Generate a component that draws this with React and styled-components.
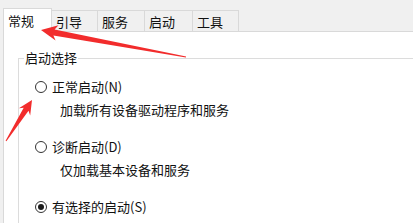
import React from 'react';
import styled, { createGlobalStyle } from 'styled-components';

const GlobalStyle = createGlobalStyle`
  html, body {
    margin: 0;
    padding: 0;
    background: #f0f0f0;
    overflow: hidden;
  }
  * {
    box-sizing: border-box;
  }
`;

const Window = styled.div`
  position: relative;
  width: 413px;
  height: 223px;
  overflow: hidden;
  background: #f0f0f0;
  font-family: "Noto Sans CJK SC", "Noto Sans", sans-serif;
  font-size: 13px;
  color: #111111;
`;

const TabBar = styled.div`
  display: flex;
  align-items: flex-end;
  height: 32px;
  margin-left: 3px;
  border-bottom: 1px solid #d9d9d9;
`;

const Tab = styled.div`
  display: flex;
  align-items: center;
  width: ${p => p.$w}px;
  height: ${p => (p.$active ? 24 : 21)}px;
  margin-left: ${p => (p.$first ? 0 : -1)}px;
  margin-bottom: ${p => (p.$active ? -1 : 0)}px;
  padding-left: 4px;
  border: 1px solid #d9d9d9;
  border-bottom: none;
  background: ${p => (p.$active ? '#ffffff' : '#f0f0f0')};
  position: relative;
  z-index: ${p => (p.$active ? 1 : 0)};
  line-height: 1;
`;

const Panel = styled.div`
  height: 191px;
  margin-left: 3px;
  border-left: 1px solid #d9d9d9;
  background: #ffffff;
  padding: 17px 0 0 14px;
`;

const GroupBox = styled.fieldset`
  width: 460px;
  margin: 0;
  padding: 0 0 0 5px;
  border: 1px solid #dcdcdc;
  border-right: none;
  border-bottom: none;
  height: 200px;
`;

const Legend = styled.legend`
  padding: 0 1px;
  line-height: 18px;
`;

const OptionList = styled.div`
  display: flex;
  flex-direction: column;
  gap: 19px;
  margin: 11px 0 0 11px;
`;

const Option = styled.div`
  display: flex;
  flex-direction: column;
  gap: 5px;
`;

const RadioRow = styled.label`
  display: flex;
  align-items: center;
  gap: 5px;
  height: 18px;
  line-height: 18px;
`;

const RadioCircle = styled.span`
  display: flex;
  align-items: center;
  justify-content: center;
  width: 12px;
  height: 12px;
  border: 1px solid #333333;
  border-radius: 50%;
  background: #ffffff;

  &::after {
    content: '';
    display: ${p => (p.$checked ? 'block' : 'none')};
    width: 6px;
    height: 6px;
    border-radius: 50%;
    background: #1a1a1a;
  }
`;

const Desc = styled.div`
  height: 18px;
  line-height: 18px;
  padding-left: 25px;
`;

const Overlay = styled.svg`
  position: absolute;
  left: 0;
  top: 0;
  pointer-events: none;
  z-index: 5;
`;

const tabs = [
  { label: '常规', w: 49, active: true },
  { label: '引导', w: 47 },
  { label: '服务', w: 48 },
  { label: '启动', w: 49 },
  { label: '工具', w: 47 },
];

const options = [
  { label: '正常启动(N)', desc: '加载所有设备驱动程序和服务' },
  { label: '诊断启动(D)', desc: '仅加载基本设备和服务' },
  { label: '有选择的启动(S)', checked: true },
];

export default function App() {
  return (
    <>
      <GlobalStyle />
      <Window>
        <TabBar>
          {tabs.map((t, i) => (
            <Tab key={t.label} $w={t.w} $active={t.active} $first={i === 0}>
              {t.label}
            </Tab>
          ))}
        </TabBar>
        <Panel>
          <GroupBox>
            <Legend>启动选择</Legend>
            <OptionList>
              {options.map(o => (
                <Option key={o.label}>
                  <RadioRow>
                    <RadioCircle $checked={o.checked} />
                    {o.label}
                  </RadioRow>
                  {o.desc && <Desc>{o.desc}</Desc>}
                </Option>
              ))}
            </OptionList>
          </GroupBox>
        </Panel>
        <Overlay width="413" height="223" viewBox="0 0 413 223">
          <polygon
            fill="#f22c2c"
            points="41,30 58.5,25.2 54.6,29.4 186.1,56.5 185.9,57.5 53.4,35.4 55.6,40.6"
          />
          <polygon
            fill="#f22c2c"
            points="32,100 30.2,115.6 28.5,110.8 6.4,141.3 5.6,140.7 23.7,107.8 18.9,108.2"
          />
        </Overlay>
      </Window>
    </>
  );
}
